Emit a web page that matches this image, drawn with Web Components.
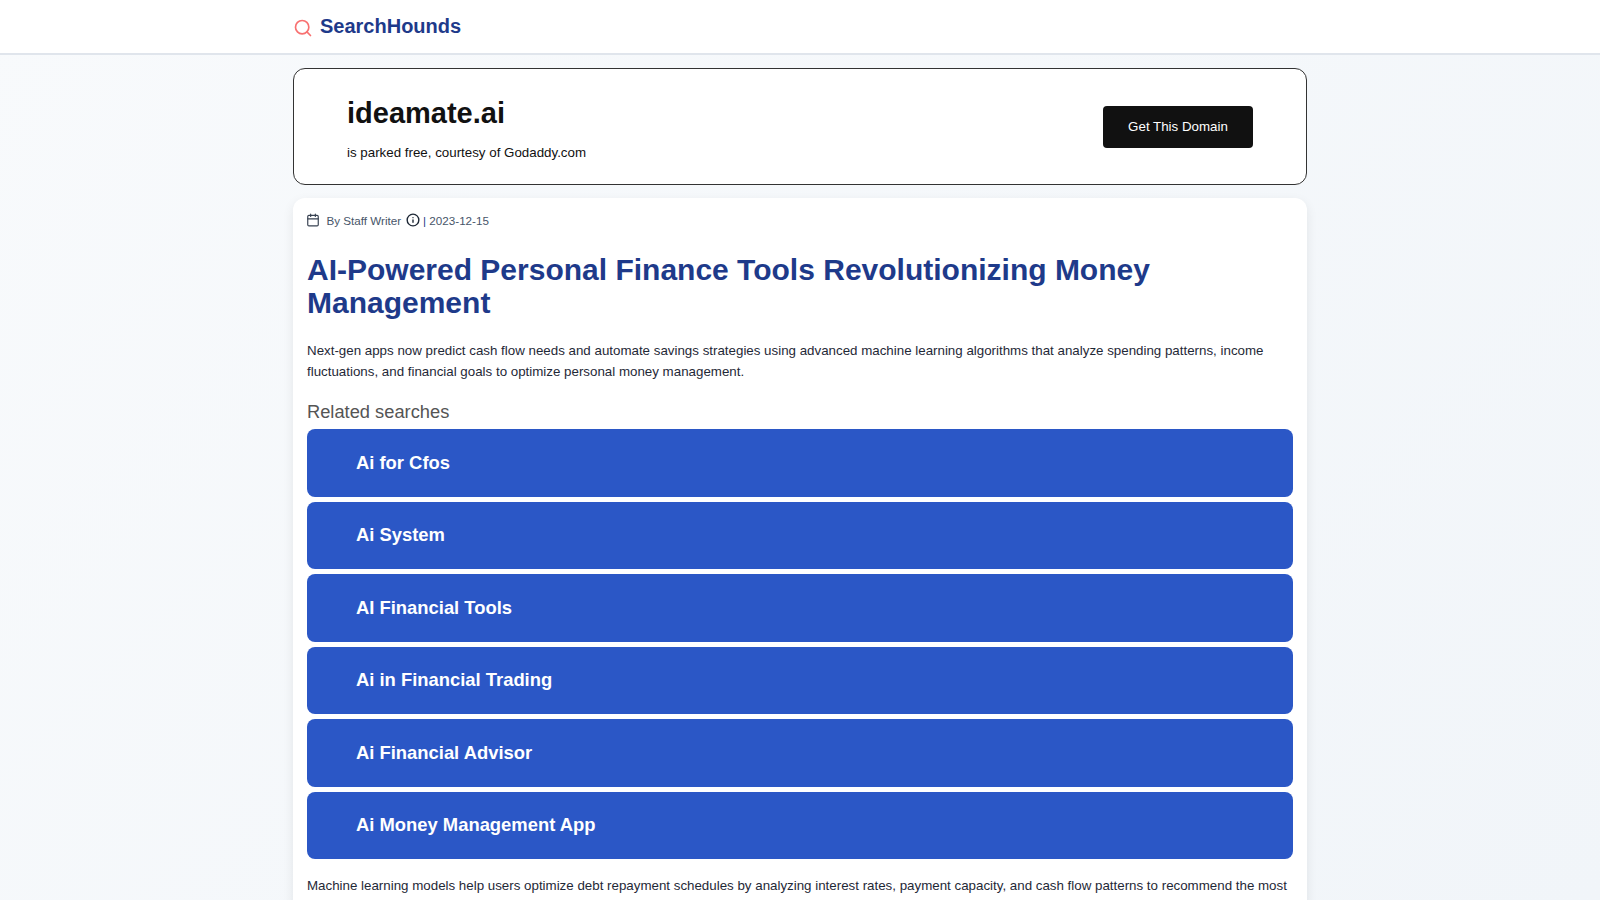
<!DOCTYPE html>
<html><head><meta charset="utf-8"><style>
html,body{margin:0;padding:0;height:900px;overflow:hidden}
body{font-family:"Liberation Sans",Arial,sans-serif;background:linear-gradient(135deg,#f8fafc,#f1f5f9);}
</style></head><body>
<site-header></site-header>
<page-main>
<domain-banner domain="ideamate.ai"></domain-banner>
<article-card>
<h-meta></h-meta>
</article-card>
</page-main>
<script>
function def(name,html){customElements.define(name,class extends HTMLElement{constructor(){super();this.attachShadow({mode:'open'}).innerHTML=html;}});}
def('site-header',`<style>:host{display:block;height:55px;box-sizing:border-box;background:#fff;border-bottom:2px solid #e0e5ec}
.in{width:1014px;margin:0 auto;height:53px;display:flex;align-items:center;gap:7px}
svg{width:20px;height:20px;margin-top:3px}
a{font-size:20px;font-weight:700;color:#1e3a8a}</style>
<div class="in"><svg viewBox="0 0 24 24" fill="none" stroke="#f87171" stroke-width="2" stroke-linecap="round" stroke-linejoin="round"><circle cx="11" cy="11" r="8"/><path d="m21 21-4.3-4.3"/></svg><a>SearchHounds</a></div>`);
def('page-main',`<style>:host{display:block;width:1014px;margin:13px auto 0}</style><slot></slot>`);
def('domain-banner',`<style>:host{display:flex;box-sizing:border-box;height:117px;background:#fff;border:1px solid #333;border-radius:12px;padding:0 53px;align-items:center;justify-content:space-between;margin-bottom:13px}
h2{margin:0;font-size:29px;font-weight:700;color:#111;line-height:36px}
p{margin:12px 0 0;font-size:13.33px;line-height:20px;color:#111}
.t{margin-top:4px}
button{all:unset;background:#111;color:#fff;font-size:13.33px;width:150px;height:42px;text-align:center;border-radius:4px;line-height:40px}</style>
<div class="t"><h2>ideamate.ai</h2><p>is parked free, courtesy of Godaddy.com</p></div><button>Get This Domain</button>`);
def('h-meta',`<style>:host{display:flex;align-items:center;font-size:11.65px;color:#475569;height:16px}
svg{width:14px;height:14px;flex:none}</style>
<svg style="margin-left:-1px" viewBox="0 0 24 24" fill="none" stroke="#374151" stroke-width="2" stroke-linecap="round" stroke-linejoin="round"><rect x="3" y="4" width="18" height="18" rx="2"/><path d="M16 2v4M8 2v4M3 10h18"/></svg><span style="margin-left:6.5px">By Staff Writer</span><svg style="margin-left:5px" viewBox="0 0 24 24" fill="none" stroke="#1f2937" stroke-width="2.4" stroke-linecap="round" stroke-linejoin="round"><circle cx="12" cy="12" r="10"/><path d="M12 16v-4M12 8h.01"/></svg><span style="margin-left:3px"><span style="color:#1e3a8a">|</span> 2023-12-15</span>`);
def('search-link',`<style>:host{display:flex;align-items:center;box-sizing:border-box;height:67.5px;background:#2b57c6;border-radius:8px;padding-left:49px;color:#fff;font-size:18.4px;font-weight:700;margin-bottom:5px}</style><slot></slot>`);
def('article-card',`<style>:host{display:block;box-sizing:border-box;background:#fff;border-radius:12px;padding:14px;box-shadow:0 4px 12px rgba(0,0,0,.08);height:720px}
h1{margin:25px 0 0;font-size:30px;line-height:33px;font-weight:700;color:#1e3a8a}
p{margin:0;font-size:13.33px;line-height:21px;color:#1f2937}
h3{margin:18px 0 6px;font-size:18.3px;line-height:23px;font-weight:400;color:#555}
.l{margin-bottom:16px}</style>
<slot></slot>
<h1>AI-Powered Personal Finance Tools Revolutionizing Money Management</h1>
<p style="margin-top:21px">Next-gen apps now predict cash flow needs and automate savings strategies using advanced machine learning algorithms that analyze spending patterns, income fluctuations, and financial goals to optimize personal money management.</p>
<h3>Related searches</h3>
<div class="l"><search-link>Ai for Cfos</search-link><search-link>Ai System</search-link><search-link>AI Financial Tools</search-link><search-link>Ai in Financial Trading</search-link><search-link>Ai Financial Advisor</search-link><search-link>Ai Money Management App</search-link></div>
<p>Machine learning models help users optimize debt repayment schedules by analyzing interest rates, payment capacity, and cash flow patterns to recommend the most</p>`);
</script></body></html>
